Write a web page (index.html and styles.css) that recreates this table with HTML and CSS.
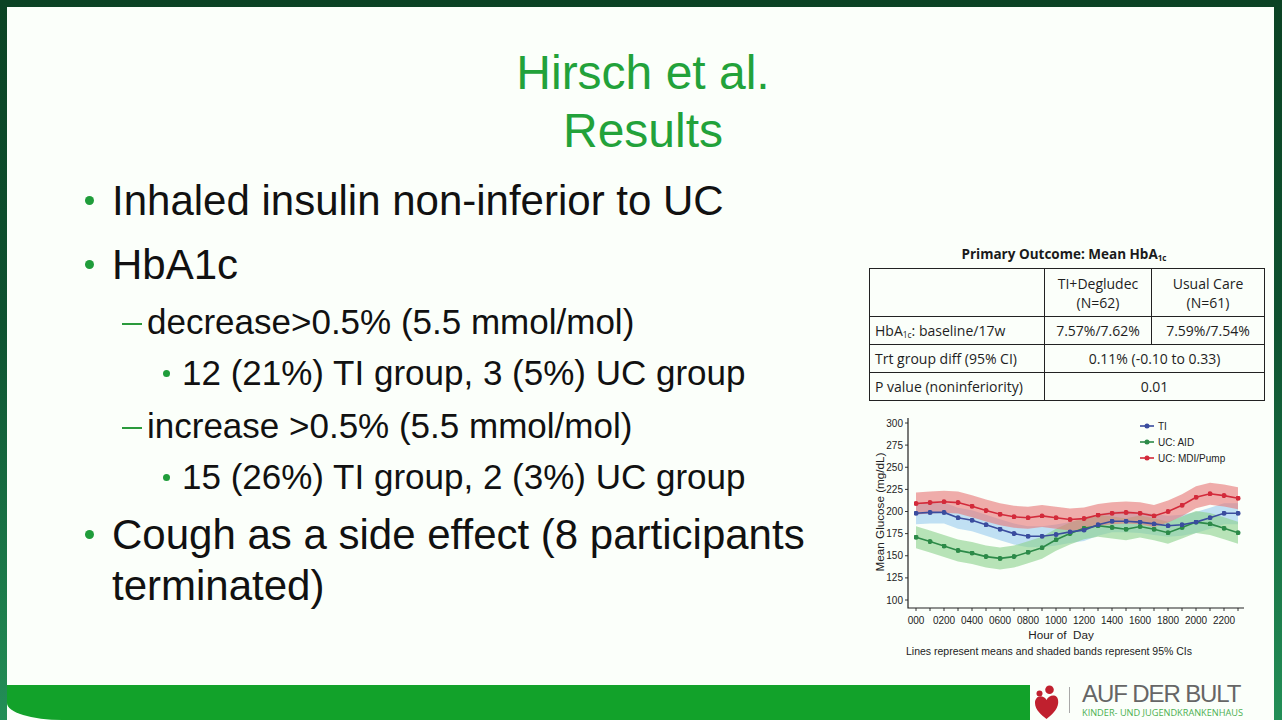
FILE: index.html
```html
<!DOCTYPE html>
<html lang="en">
<head>
<meta charset="utf-8">
<title>Hirsch et al. Results</title>
<link rel="stylesheet" href="styles.css">
</head>
<body>
<div class="slide">
  <div class="main">
    <h1 class="title">Hirsch et al.<br>Results</h1>
    <div class="content">
      <ul class="points">
        <li class="l1">Inhaled insulin non-inferior to UC</li>
        <li class="l1">HbA1c</li>
        <li class="l2">decrease&gt;0.5% (5.5 mmol/mol)</li>
        <li class="l3">12 (21%) TI group, 3 (5%) UC group</li>
        <li class="l2">increase &gt;0.5% (5.5 mmol/mol)</li>
        <li class="l3">15 (26%) TI group, 2 (3%) UC group</li>
        <li class="l1">Cough as a side effect (8 participants terminated)</li>
      </ul>
      <div class="side">
        <div class="tbl-title">Primary Outcome: Mean HbA<sub>1c</sub></div>
        <table class="outcome">
          <colgroup><col class="c1"><col class="c2"><col class="c3"></colgroup>
          <tr class="head"><td></td><td class="ctr">TI+Degludec<br>(N=62)</td><td class="ctr">Usual Care<br>(N=61)</td></tr>
          <tr><td>HbA<sub>1c</sub>: baseline/17w</td><td class="ctr">7.57%/7.62%</td><td class="ctr">7.59%/7.54%</td></tr>
          <tr><td>Trt group diff (95% CI)</td><td class="ctr" colspan="2">0.11% (-0.10 to 0.33)</td></tr>
          <tr><td>P value (noninferiority)</td><td class="ctr" colspan="2">0.01</td></tr>
        </table>
        <svg class="chart" viewBox="0 0 396 250" width="396" height="250">
          <defs>
            <marker id="mr" viewBox="0 0 6 6" refX="3" refY="3" markerWidth="5" markerHeight="5" markerUnits="userSpaceOnUse"><circle cx="3" cy="3" r="3" fill="#d32a3a"/></marker>
            <marker id="mb" viewBox="0 0 6 6" refX="3" refY="3" markerWidth="5" markerHeight="5" markerUnits="userSpaceOnUse"><circle cx="3" cy="3" r="3" fill="#3a4c9e"/></marker>
            <marker id="mg" viewBox="0 0 6 6" refX="3" refY="3" markerWidth="5" markerHeight="5" markerUnits="userSpaceOnUse"><circle cx="3" cy="3" r="3" fill="#2c8a48"/></marker>
          </defs>
          <polygon class="band-b" points="48,93.3 62,92.4 76,92.4 90,97.7 104,100.3 118,104.8 132,109.2 146,113.6 160,116.3 174,116.3 188,114.5 202,111.9 216,110.1 230,104.8 244,101.2 258,101.2 272,102.1 286,103.9 300,105.7 314,104.8 328,102.1 342,97.7 356,93.3 370,93.3 370,114.3 356,114.3 342,118.7 328,123.1 314,125.8 300,126.7 286,124.9 272,123.1 258,122.2 244,122.2 230,125.8 216,131.1 202,132.9 188,135.5 174,137.3 160,137.3 146,134.6 132,130.2 118,125.8 104,121.3 90,118.7 76,113.4 62,113.4 48,114.3"/>
          <polygon class="band-g" points="48,116.2 62,120.6 76,125.0 90,129.4 104,132.1 118,135.6 132,137.4 146,135.6 160,131.2 174,126.8 188,118.8 202,112.6 216,107.3 230,104.7 244,106.4 258,108.2 272,105.5 286,108.2 300,111.7 314,106.4 328,101.1 342,102.9 356,107.3 370,111.7 370,133.7 356,129.3 342,124.9 328,123.1 314,128.4 300,133.7 286,130.2 272,127.5 258,130.2 244,128.4 230,126.7 216,129.3 202,134.6 188,140.8 174,148.8 160,153.2 146,157.6 132,159.4 118,157.6 104,154.1 90,151.4 76,147.0 62,142.6 48,138.2"/>
          <polygon class="band-r" points="48,82.5 62,81.6 76,80.8 90,81.6 104,85.2 118,89.6 132,93.2 146,95.8 160,96.7 174,94.9 188,96.7 202,98.5 216,97.6 230,94.0 244,92.3 258,91.4 272,92.3 286,94.9 300,90.5 314,84.3 328,76.3 342,72.8 356,74.6 370,77.2 370,99.2 356,96.6 342,94.8 328,98.3 314,106.3 300,112.5 286,116.9 272,114.3 258,113.4 244,114.3 230,116.0 216,119.6 202,120.5 188,118.7 174,116.9 160,118.7 146,117.8 132,115.2 118,111.6 104,107.2 90,103.6 76,102.8 62,103.6 48,104.5"/>
          <polyline class="ln-g" marker-start="url(#mg)" marker-mid="url(#mg)" marker-end="url(#mg)" points="48,127.2 62,131.6 76,136.0 90,140.4 104,143.1 118,146.6 132,148.4 146,146.6 160,142.2 174,137.8 188,129.8 202,123.6 216,118.3 230,115.7 244,117.4 258,119.2 272,116.5 286,119.2 300,122.7 314,117.4 328,112.1 342,113.9 356,118.3 370,122.7"/>
          <polyline class="ln-b" marker-start="url(#mb)" marker-mid="url(#mb)" marker-end="url(#mb)" points="48,103.3 62,102.4 76,102.4 90,107.7 104,110.3 118,114.8 132,119.2 146,123.6 160,126.3 174,126.3 188,124.5 202,121.9 216,120.1 230,114.8 244,111.2 258,111.2 272,112.1 286,113.9 300,115.7 314,114.8 328,112.1 342,107.7 356,103.3 370,103.3"/>
          <polyline class="ln-r" marker-start="url(#mr)" marker-mid="url(#mr)" marker-end="url(#mr)" points="48,93.5 62,92.6 76,91.8 90,92.6 104,96.2 118,100.6 132,104.2 146,106.8 160,107.7 174,105.9 188,107.7 202,109.5 216,108.6 230,105.0 244,103.3 258,102.4 272,103.3 286,105.9 300,101.5 314,95.3 328,87.3 342,83.8 356,85.6 370,88.2"/>
          <path class="axis" d="M40 8 V198 H376"/>
          <path class="tick" d="M37 190H40M37 167.9H40M37 145.75H40M37 123.6H40M37 101.5H40M37 79.4H40M37 57.25H40M37 35.1H40M37 13H40 M48 198v3M62 198v3M76 198v3M90 198v3M104 198v3M118 198v3M132 198v3M146 198v3M160 198v3M174 198v3M188 198v3M202 198v3M216 198v3M230 198v3M244 198v3M258 198v3M272 198v3M286 198v3M300 198v3M314 198v3M328 198v3M342 198v3M356 198v3M370 198v3"/>
          <g class="ylab">
            <text x="35" y="193.5">100</text>
            <text x="35" y="171.4">125</text>
            <text x="35" y="149.3">150</text>
            <text x="35" y="127.1">175</text>
            <text x="35" y="105">200</text>
            <text x="35" y="82.9">225</text>
            <text x="35" y="60.8">250</text>
            <text x="35" y="38.6">275</text>
            <text x="35" y="16.5">300</text>
          </g>
          <g class="xlab">
            <text x="48" y="213.5">000</text>
            <text x="76" y="213.5">0200</text>
            <text x="104" y="213.5">0400</text>
            <text x="132" y="213.5">0600</text>
            <text x="160" y="213.5">0800</text>
            <text x="188" y="213.5">1000</text>
            <text x="216" y="213.5">1200</text>
            <text x="244" y="213.5">1400</text>
            <text x="272" y="213.5">1600</text>
            <text x="300" y="213.5">1800</text>
            <text x="328" y="213.5">2000</text>
            <text x="356" y="213.5">2200</text>
          </g>
          <text class="ytitle" transform="translate(16 102) rotate(-90)">Mean Glucose (mg/dL)</text>
          <text class="xtitle" x="193" y="228.5">Hour of&#160; Day</text>
          <text class="caption" x="38" y="244.5">Lines represent means and shaded bands represent 95% CIs</text>
          <g class="legend">
            <path class="ln-b" d="M272 16H286"/>
            <circle cx="279" cy="16" r="2.5" fill="#3a4c9e"/>
            <path class="ln-g" d="M272 32H286"/>
            <circle cx="279" cy="32" r="2.5" fill="#2c8a48"/>
            <path class="ln-r" d="M272 48H286"/>
            <circle cx="279" cy="48" r="2.5" fill="#d32a3a"/>
            <text x="290" y="19.5">TI</text>
            <text x="290" y="35.5">UC: AID</text>
            <text x="290" y="51.5">UC: MDI/Pump</text>
          </g>
        </svg>
      </div>
    </div>
  </div>
  <div class="footer">
    <div class="bar"></div>
    <div class="logo">
      <svg class="mark" viewBox="0 0 27 35" width="27" height="35">
        <circle cx="16.5" cy="4.8" r="4.3" fill="#c0202e"/>
        <circle cx="6.5" cy="8.6" r="3" fill="#c0202e"/>
        <path d="M13.5 34 C9 30.5 2 25 2 18 C2 14 4.5 11 8 11.3 C10.5 11.6 12.5 13 13.5 15 C15 12 18 10.2 21 10.6 C24 11 25.6 14 25.2 18 C24.6 25 18 30.5 13.5 34 Z" fill="#c0202e"/>
      </svg>
      <div class="divider"></div>
      <div class="brand">
        <div class="brand-name">AUF DER BULT</div>
        <div class="brand-sub">KINDER- UND JUGENDKRANKENHAUS</div>
      </div>
    </div>
  </div>
</div>
</body>
</html>
```
FILE: styles.css
```css
* { box-sizing: border-box; margin: 0; padding: 0; }
html, body { height: 100%; }
body {
  background: linear-gradient(180deg, #0b4324 0%, #0e5230 45%, #238f57 100%);
  padding: 7px 8px 0 7px;
  font-family: "Liberation Sans", Arial, sans-serif;
  overflow: hidden;
}
.slide {
  background: #fbfffa;
  height: 713px;
  display: flex;
  flex-direction: column;
}
.main { flex: 1; display: flex; flex-direction: column; min-height: 0; }
.title {
  text-align: center;
  color: #22a23a;
  font-size: 48px;
  line-height: 58px;
  font-weight: normal;
  padding-top: 37px;
  padding-left: 5px;
}
.content { display: flex; flex: 1; min-height: 0; }
.points { flex: 1; list-style: none; padding-top: 15px; color: #111; }
.l1 {
  display: flex;
  font-size: 42px;
  line-height: 51px;
  margin-top: 13px;
  padding-left: 78px;
}
.l1:first-child { margin-top: 0; }
.l3 + .l1 { margin-top: 7px; }
.l1::before {
  content: "";
  flex: none;
  width: 9px;
  height: 9px;
  border-radius: 50%;
  background: #1f9d3a;
  margin: 21px 18px 0 0;
}
.l2 {
  display: flex;
  font-size: 35px;
  line-height: 50px;
  margin-top: 3px;
  padding-left: 115px;
}
.l1 + .l2 { margin-top: 7px; }
.l2::before {
  content: "";
  flex: none;
  width: 20px;
  height: 2px;
  background: #2a9a3c;
  margin: 26px 5px 0 0;
}
.l3 {
  display: flex;
  font-size: 35px;
  line-height: 50px;
  margin-top: 1px;
  padding-left: 156px;
}
.l3::before {
  content: "";
  flex: none;
  width: 7px;
  height: 7px;
  border-radius: 50%;
  background: #1f9d3a;
  margin: 22px 12px 0 0;
}
.side { flex: none; width: 396px; margin-right: 10px; padding-top: 86px; }
.tbl-title {
  text-align: center;
  font-family: "Open Sans", sans-serif;
  font-weight: bold;
  font-size: 13.5px;
  line-height: 16px;
  color: #1a1a1a;
  padding-right: 4px;
}
.tbl-title sub, .outcome sub { font-size: 0.6em; vertical-align: -0.25em; line-height: 0; }
.outcome {
  margin: 6px 0 0 1px;
  width: 395px;
  border-collapse: collapse;
  font-family: "Open Sans", sans-serif;
  font-size: 14px;
  color: #1e1e1e;
  table-layout: fixed;
}
.outcome col.c1 { width: 175px; }
.outcome col.c2 { width: 107px; }
.outcome col.c3 { width: 113px; }
.outcome td {
  border: 1.5px solid #222;
  height: 28px;
  line-height: 19px;
  padding: 0 5px;
  white-space: nowrap;
}
.outcome tr.head td { height: 48px; }
.outcome td.ctr { text-align: center; padding: 0 2px; }
.chart { display: block; margin-top: 9px; }
.band-b { fill: #9fd0ef; opacity: 0.65; }
.band-g { fill: #8ad08a; opacity: 0.6; }
.band-r { fill: #e87474; opacity: 0.6; }
.ln-g, .ln-b, .ln-r { fill: none; stroke-width: 1.6; }
.ln-g { stroke: #2c8a48; }
.ln-b { stroke: #3a4c9e; }
.ln-r { stroke: #d32a3a; }
.axis { fill: none; stroke: #222; stroke-width: 1.2; }
.tick { fill: none; stroke: #222; stroke-width: 0.9; }
.ylab text { font-family: "Liberation Sans", Arial, sans-serif; font-size: 10px; fill: #222; text-anchor: end; }
.xlab text { font-family: "Liberation Sans", Arial, sans-serif; font-size: 10px; fill: #222; text-anchor: middle; }
.ytitle { font-family: "Liberation Sans", Arial, sans-serif; font-size: 11.7px; fill: #222; text-anchor: middle; }
.xtitle { font-family: "Liberation Sans", Arial, sans-serif; font-size: 11.7px; fill: #222; text-anchor: middle; }
.caption { font-family: "Liberation Sans", Arial, sans-serif; font-size: 10.5px; fill: #222; }
.legend text { font-family: "Liberation Sans", Arial, sans-serif; font-size: 10px; fill: #222; }
.footer { flex: none; height: 35px; display: flex; }
.bar {
  flex: 1;
  background: #12a22a;
  border-bottom-left-radius: 55px 17px;
}
.logo { flex: none; width: 244px; display: flex; align-items: flex-start; }
.mark { display: block; margin-left: 3px; }
.divider { width: 1px; height: 26px; background: #a8a8a8; margin: 2px 0 0 9px; }
.brand { margin-left: 12px; }
.brand-name {
  font-family: "Liberation Sans", Arial, sans-serif;
  font-size: 24px;
  line-height: 24px;
  color: #666;
  letter-spacing: -1.1px;
  margin-top: -3px;
}
.brand-sub {
  font-family: "Open Sans", sans-serif;
  font-size: 9.2px;
  line-height: 10px;
  color: #4cb050;
  margin-top: 1.5px;
  white-space: nowrap;
}
```
